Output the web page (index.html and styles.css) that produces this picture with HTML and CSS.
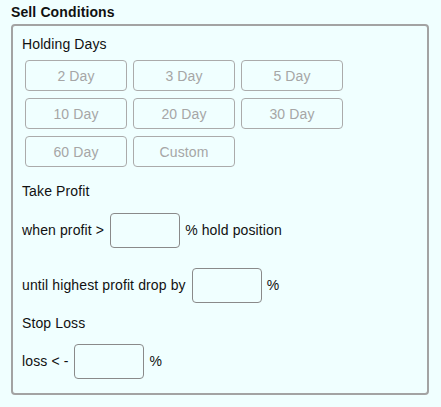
FILE: index.html
```html
<!DOCTYPE html>
<html>
<head>
<meta charset="utf-8">
<link rel="stylesheet" href="styles.css">
</head>
<body>
<div class="panel">
  <div class="title">Sell Conditions</div>
  <div class="box">
    <div class="label">Holding Days</div>
    <div class="days">
      <button class="day">2 Day</button>
      <button class="day">3 Day</button>
      <button class="day">5 Day</button>
      <button class="day">10 Day</button>
      <button class="day">20 Day</button>
      <button class="day">30 Day</button>
      <button class="day">60 Day</button>
      <button class="day">Custom</button>
    </div>
    <div class="label label-tp">Take Profit</div>
    <div class="row row-1">when profit &gt; <input class="num" type="text"> % hold position</div>
    <div class="row row-2">until highest profit drop by <input class="num" type="text"> %</div>
    <div class="label label-sl">Stop Loss</div>
    <div class="row row-3">loss &lt; - <input class="num" type="text"> %</div>
  </div>
</div>
</body>
</html>
```
FILE: styles.css
```css
html, body {
  margin: 0;
  padding: 0;
  background: #f0ffff;
}
body {
  font-family: "Liberation Sans", Arial, sans-serif;
  font-size: 14px;
  color: #111;
  letter-spacing: 0.12px;
}
.panel {
  padding: 4px 0 0 11px;
  width: 418px;
}
.title {
  font-weight: bold;
  line-height: 16px;
  height: 20px;
}
.box {
  border: 2px solid #a3a3a3;
  border-radius: 4px;
  padding: 10px 8px 14px 8px;
  width: 398px;
  box-sizing: content-box;
}
.label {
  line-height: 16px;
  padding-left: 1px;
}
.days {
  display: grid;
  grid-template-columns: repeat(3, 102px);
  column-gap: 6px;
  row-gap: 7px;
  margin: 8px 0 0 4px;
}
.day {
  height: 31px;
  border: 1px solid #ababab;
  border-radius: 4px;
  background: transparent;
  color: #a6a6a6;
  font-family: inherit;
  font-size: 14px;
  letter-spacing: 0.12px;
  padding: 0;
}
.label-tp {
  margin-top: 16px;
}
.row {
  padding-left: 1px;
  height: 35px;
  line-height: 35px;
  display: flex;
  align-items: center;
  white-space: pre;
}
.row-1 { margin-top: 14px; }
.row-2 { margin-top: 20px; }
.label-sl { margin-top: 12px; }
.row-3 { margin-top: 13px; }
.num {
  width: 70px;
  height: 35px;
  box-sizing: border-box;
  border: 1px solid #8a8a8a;
  border-radius: 4px;
  background: transparent;
  margin: 0 1px 0 2px;
  padding: 0;
}
```
